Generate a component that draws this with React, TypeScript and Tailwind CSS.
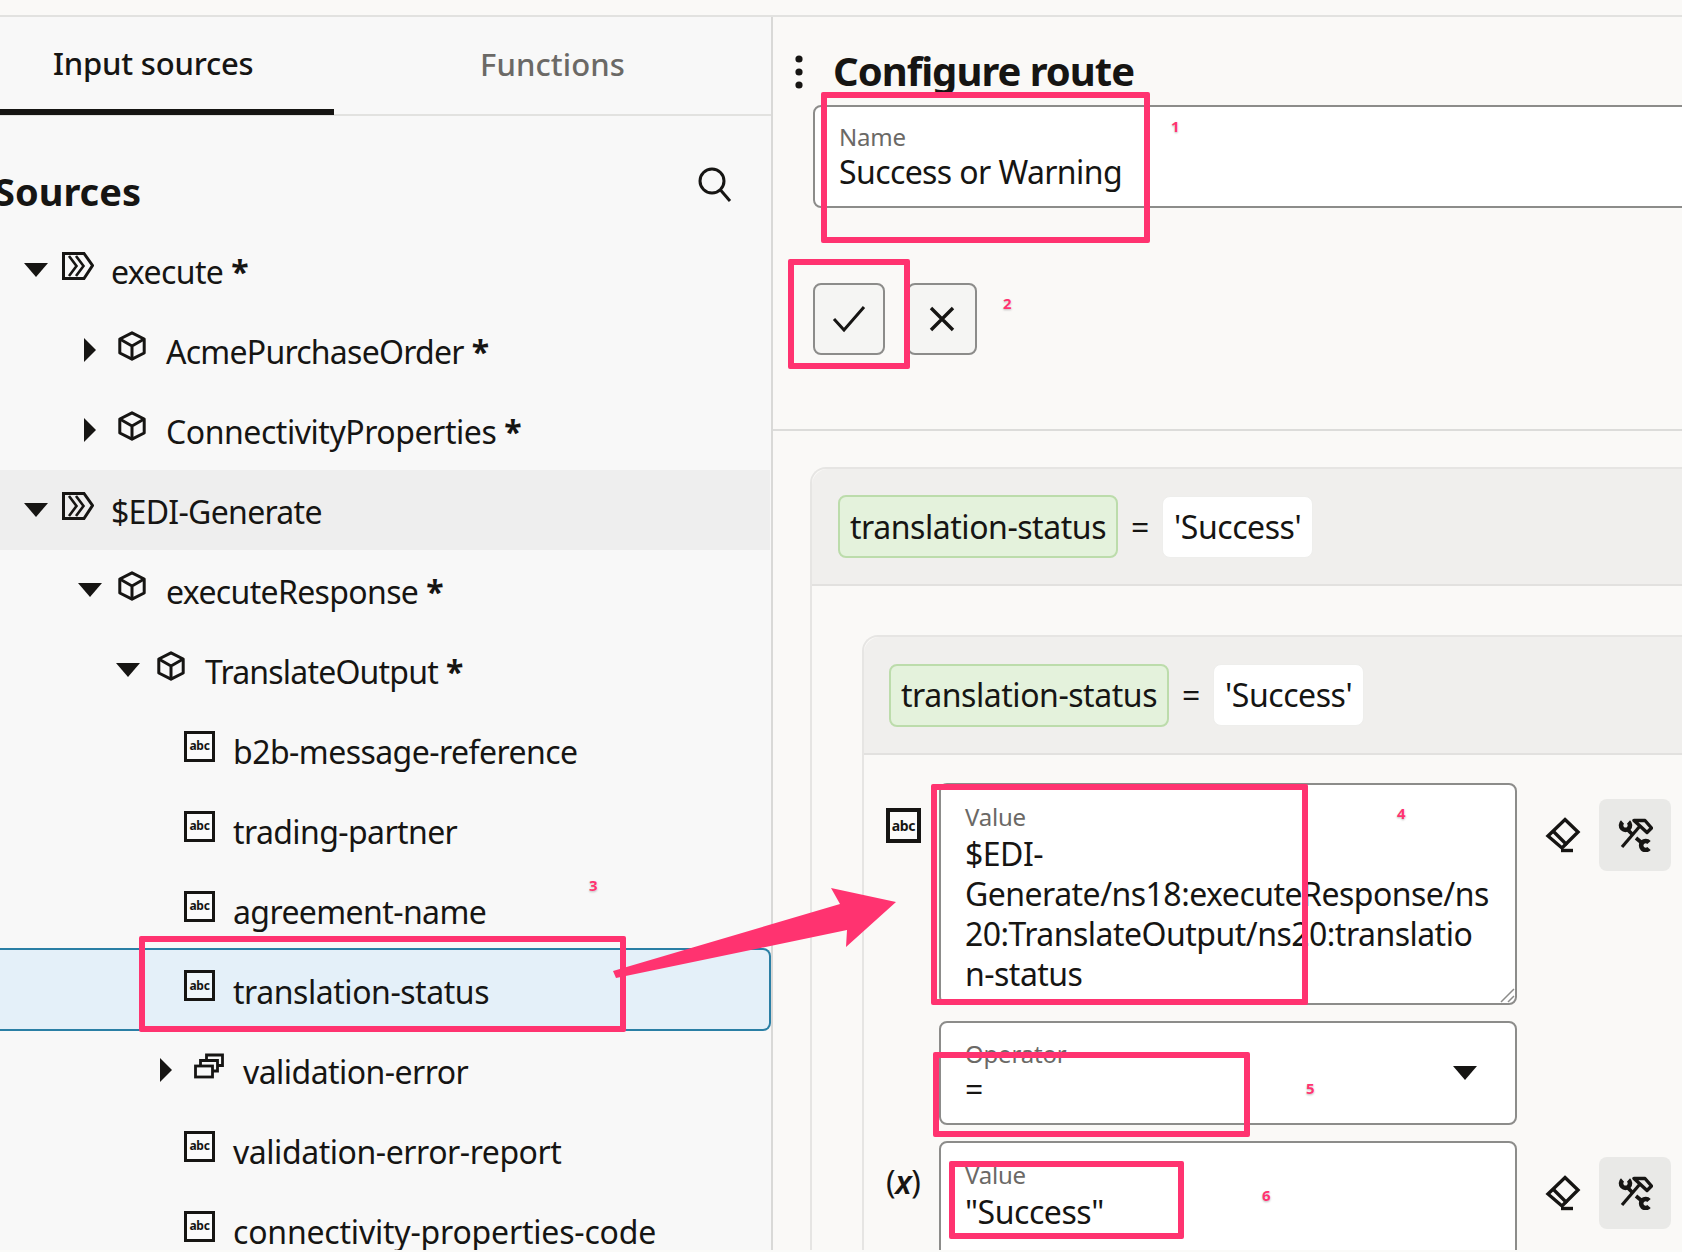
const FONT = "font-['Noto_Sans',sans-serif]";

function Caret({ dir, className = '' }: { dir: 'down' | 'right'; className?: string }) {
  return dir === 'down' ? (
    <svg viewBox="0 0 24 14" className={`w-[24px] h-[14px] shrink-0 ${className}`}>
      <path d="M0 0H24L12 14Z" fill="#161513" />
    </svg>
  ) : (
    <svg viewBox="0 0 12 24" className={`w-[12px] h-[24px] shrink-0 ${className}`}>
      <path d="M0 0V24L12 12Z" fill="#161513" />
    </svg>
  );
}

function FlowIcon({ className }: { className: string }) {
  return (
    <svg viewBox="0 0 32 28" className={`w-[32px] h-[28px] shrink-0 ${className}`} fill="none" stroke="#161513" strokeWidth="3">
      <path d="M1.5 1.5H22L30.5 13.5L22 26.5H1.5Z" />
      <path d="M7 4L14.5 14L7 24M14 4L21.5 14L14 24" strokeWidth="2.6" />
    </svg>
  );
}

function CubeIcon({ className }: { className: string }) {
  return (
    <svg viewBox="0 0 28 30" className={`w-[28px] h-[30px] shrink-0 ${className}`} fill="none" stroke="#161513" strokeWidth="3" strokeLinejoin="round">
      <path d="M14 1.8L26.2 8V22L14 28.2L1.8 22V8Z" />
      <path d="M1.8 8L14 15L26.2 8M14 15V28.2" />
    </svg>
  );
}

function AbcIcon({ className }: { className: string }) {
  return (
    <span className={`flex items-center justify-center w-[31px] h-[31px] shrink-0 border-[3px] border-[#161513] bg-white/40 text-[12px] leading-none font-bold tracking-[-0.3px] text-[#161513] ${className}`}>
      abc
    </span>
  );
}

function ArrayIcon({ className }: { className: string }) {
  return (
    <svg viewBox="0 0 30 26" className={`w-[30px] h-[26px] shrink-0 ${className}`} fill="none" stroke="#161513" strokeWidth="2.8">
      <rect x="1.5" y="13" width="17" height="11" />
      <path d="M6.5 13V7.5H23.5V18H18.5" />
      <path d="M12.5 7.5V2H28.5V12.5H23.5" />
    </svg>
  );
}

function Star() {
  return <span className="font-bold ml-[8px]">*</span>;
}

function Row({
  children,
  label,
  star,
  className = '',
  textClass,
}: {
  children: React.ReactNode;
  label: string;
  star?: boolean;
  className?: string;
  textClass: string;
}) {
  return (
    <div className={`flex items-center h-[80px] mr-[1px] shrink-0 ${className}`}>
      {children}
      <span className={`pt-[4px] text-[32px] leading-[40px] text-[#161513] whitespace-nowrap ${textClass}`}>
        {label}
        {star && <Star />}
      </span>
    </div>
  );
}

function Eraser() {
  return (
    <svg viewBox="0 0 36 36" className="w-[36px] h-[36px]" fill="none" stroke="#161513" strokeWidth="3.4">
      <path d="M20 2.5L33 15L17 31L3 19Z" />
      <path d="M8 14L22 28" />
      <path d="M16 33.5H28" />
    </svg>
  );
}

function Tools() {
  return (
    <svg viewBox="0 0 36 34" className="w-[36px] h-[34px]" fill="none" stroke="#161513">
      <path d="M5 29L23 8" strokeWidth="3.2" />
      <path d="M17 2.5H28L34.5 10L30 14.5L23 8Z" strokeWidth="3.4" strokeLinejoin="round" />
      <path d="M5.5 4A4.5 4.5 0 1 0 11.5 4" strokeWidth="4.6" />
      <path d="M10 11L16 17" strokeWidth="3.8" />
      <path d="M32 24.5A4.5 4.5 0 1 0 32 30.5" strokeWidth="4.6" />
      <path d="M19 20L25 25" strokeWidth="3.8" />
    </svg>
  );
}

function Chips() {
  return (
    <div className="flex items-center">
      <span className="flex items-center h-[63px] px-[10px] rounded-lg border-2 border-[#bcdcab] bg-[#e4f2dc] text-[32px] text-[#161513]">
        translation-status
      </span>
      <span className="w-[44px] text-center text-[32px] text-[#161513]">=</span>
      <span className="flex items-center h-[62px] px-[11px] rounded-lg border border-[#eeeeec] bg-white text-[32px] text-[#161513]">
        'Success'
      </span>
    </div>
  );
}

function Label({ children, className = 'leading-[32px]' }: { children: React.ReactNode; className?: string }) {
  return <div className={`text-[24px] tracking-[-0.2px] text-[#6b6966] ${className}`}>{children}</div>;
}

function Pink({ className }: { className: string }) {
  return <div className={`absolute border-[6px] border-[#ff3370] rounded-[2px] ${className}`} />;
}

function Num({ n, className }: { n: number; className: string }) {
  return (
    <span className={`absolute text-[15px] leading-[15px] font-bold tracking-normal text-[#ff3370] [text-shadow:0_0_2px_white,0_1px_2px_#aaa] ${className}`}>
      {n}
    </span>
  );
}

function Actions() {
  return (
    <div className="flex items-center ml-[28px] mt-[16px] h-[72px]">
      <Eraser />
      <div className="flex items-center justify-center w-[72px] h-[72px] ml-[18px] rounded-lg bg-[#e9e9e7]">
        <Tools />
      </div>
    </div>
  );
}

export default function App() {
  return (
    <div className={`relative w-[1682px] h-[1252px] overflow-hidden bg-[#fafaf8] tracking-[-0.45px] ${FONT}`}>
      <div className="flex flex-col h-[1250px] overflow-hidden">
        <div className="h-[17px] shrink-0 bg-[#faf9f7] border-b-2 border-[#e2e2e0]" />
        <div className="flex flex-1 min-h-0">
          {/* Left panel */}
          <div className="flex flex-col w-[773px] shrink-0 overflow-hidden bg-[#f8f8f8] border-r-2 border-[#d9d9d7]">
            <div className="flex h-[99px] shrink-0 border-b-2 border-[#e2e2e0]">
              <div className="flex items-center w-[334px] h-[98px] pl-[53px] border-b-[6px] border-[#161513] text-[31px] font-medium tracking-[-0.2px] text-[#161513]">
                Input sources
              </div>
              <div className="flex items-center justify-center flex-1 pb-[2px] text-[31px] font-medium tracking-[0.1px] text-[#6b6966]">
                Functions
              </div>
            </div>
            <div className="flex items-start justify-between h-[114px] shrink-0 pr-[38px]">
              <div className="-ml-[6px] mt-[50px] text-[38px] leading-[50px] font-bold tracking-normal text-[#161513]">Sources</div>
              <svg viewBox="0 0 36 36" className="w-[36px] h-[36px] mt-[50px]" fill="none" stroke="#161513" strokeWidth="3">
                <circle cx="15" cy="15" r="12" />
                <path d="M23.5 24L33 35" />
              </svg>
            </div>
            <Row label="execute" star className="pl-[24px]" textClass="ml-[17px] tracking-[-0.6px]">
              <Caret dir="down" />
              <FlowIcon className="ml-[14px] mb-[8px]" />
            </Row>
            <Row label="AcmePurchaseOrder" star className="pl-[84px]" textClass="ml-[20px] tracking-[-0.75px]">
              <Caret dir="right" />
              <CubeIcon className="ml-[22px] mb-[8px]" />
            </Row>
            <Row label="ConnectivityProperties" star className="pl-[84px]" textClass="ml-[20px]">
              <Caret dir="right" />
              <CubeIcon className="ml-[22px] mb-[8px]" />
            </Row>
            <Row label="$EDI-Generate" className="pl-[24px] bg-[#eeeeee]" textClass="ml-[17px] tracking-[-0.7px]">
              <Caret dir="down" />
              <FlowIcon className="ml-[14px] mb-[8px]" />
            </Row>
            <Row label="executeResponse" star className="pl-[78px]" textClass="ml-[20px] tracking-[-0.65px]">
              <Caret dir="down" />
              <CubeIcon className="ml-[16px] mb-[8px]" />
            </Row>
            <Row label="TranslateOutput" star className="pl-[116px]" textClass="ml-[20px] tracking-[-0.8px]">
              <Caret dir="down" />
              <CubeIcon className="ml-[17px] mb-[8px]" />
            </Row>
            <Row label="b2b-message-reference" className="pl-[184px]" textClass="ml-[18px] tracking-[-0.55px]">
              <AbcIcon className="mb-[8px]" />
            </Row>
            <Row label="trading-partner" className="pl-[184px]" textClass="ml-[18px] tracking-[-0.6px]">
              <AbcIcon className="mb-[8px]" />
            </Row>
            <Row label="agreement-name" className="pl-[184px]" textClass="ml-[18px] tracking-[-0.6px]">
              <AbcIcon className="mb-[8px]" />
            </Row>
            <Row
              label="translation-status"
              className="pl-[184px] !h-[83px] -mt-[2px] -mb-[1px] !mr-0 bg-[#e4f0f9] border-y-2 border-r-2 border-[#2a7fa5] rounded-r-lg"
              textClass="ml-[18px]"
            >
              <AbcIcon className="mb-[8px]" />
            </Row>
            <Row label="validation-error" className="pl-[160px]" textClass="ml-[19px] tracking-[-0.55px]">
              <Caret dir="right" />
              <ArrayIcon className="ml-[22px] mb-[8px]" />
            </Row>
            <Row label="validation-error-report" className="pl-[184px]" textClass="ml-[18px]">
              <AbcIcon className="mb-[8px]" />
            </Row>
            <Row label="connectivity-properties-code" className="pl-[184px]" textClass="ml-[18px] tracking-[-0.2px]">
              <AbcIcon className="mb-[8px]" />
            </Row>
          </div>

          {/* Right panel */}
          <div className="flex flex-col flex-1 min-w-0 overflow-hidden bg-[#faf9f7]">
            <div className="h-[414px] shrink-0 border-b-2 border-[#dcdcda]">
              <div className="flex items-center h-[88px] pt-[22px] pl-[21px]">
                <svg viewBox="0 0 10 36" className="w-[10px] h-[36px]" fill="#161513">
                  <circle cx="5" cy="5" r="3.6" />
                  <circle cx="5" cy="18" r="3.6" />
                  <circle cx="5" cy="31" r="3.6" />
                </svg>
                <div className="ml-[29px] pb-[2px] text-[40px] leading-[50px] font-bold tracking-[-1px] text-[#161513]">Configure route</div>
              </div>
              <div className="ml-[40px] h-[103px] w-[900px] pt-[15px] pl-[24px] rounded-l-lg border-2 border-[#8c8c8a] bg-white">
                <Label className="leading-[30px]">Name</Label>
                <div className="text-[32px] leading-[40px] tracking-[-0.6px] text-[#161513]">Success or Warning</div>
              </div>
              <div className="flex gap-[22px] ml-[40px] mt-[75px]">
                <div className="flex items-center justify-center w-[72px] h-[72px] rounded-lg border-2 border-[#8c8c8a] bg-[#f5f5f3]">
                  <svg viewBox="0 0 34 28" className="w-[34px] h-[28px]" fill="none" stroke="#161513" strokeWidth="3">
                    <path d="M2 14L12 25L32 2" />
                  </svg>
                </div>
                <div className="flex items-center justify-center w-[70px] h-[72px] rounded-lg border-2 border-[#8c8c8a] bg-[#f5f5f3]">
                  <svg viewBox="0 0 26 26" className="w-[26px] h-[26px]" fill="none" stroke="#161513" strokeWidth="3.4">
                    <path d="M2 2L24 24M24 2L2 24" />
                  </svg>
                </div>
              </div>
            </div>
            {/* Outer card */}
            <div className="ml-[37px] mt-[36px] w-[900px] flex-1 rounded-tl-2xl border-l-2 border-t-2 border-[#e6e5e3]">
              <div className="flex items-center h-[117px] pl-[26px] bg-[#f0efed] border-b-2 border-[#e2e1df] rounded-tl-2xl">
                <Chips />
              </div>
              {/* Inner card */}
              <div className="ml-[50px] mt-[49px] rounded-tl-2xl border-l-2 border-t-2 border-[#e6e5e3]">
                <div className="flex items-center h-[118px] pl-[25px] bg-[#f0efed] border-b-2 border-[#e2e1df] rounded-tl-2xl">
                  <Chips />
                </div>
                <div className="flex flex-col gap-[16px] pt-[28px]">
                  <div className="flex items-start">
                    <div className="w-[75px] pl-[22px] pt-[25px] shrink-0">
                      <AbcIcon className="!w-[35px] !h-[35px] !border-[4px] !text-[14px]" />
                    </div>
                    <div className="relative w-[578px] h-[222px] shrink-0 pt-[16px] pl-[24px] rounded-lg border-2 border-[#8c8c8a] bg-white text-[32px] leading-[40px] tracking-[-0.52px] text-[#161513]">
                      <div className="mb-[1px]">
                        <Label>Value</Label>
                      </div>
                      <div>$EDI-</div>
                      <div>Generate/ns18:executeResponse/ns</div>
                      <div>20:TranslateOutput/ns20:translatio</div>
                      <div>n-status</div>
                      <svg viewBox="0 0 16 16" className="absolute right-0 bottom-0 w-[16px] h-[16px]" stroke="#8c8c8a" strokeWidth="1.5">
                        <path d="M2 15L15 2M9 15L15 9" />
                      </svg>
                    </div>
                    <Actions />
                  </div>
                  <div className="flex items-start">
                    <div className="w-[75px] shrink-0" />
                    <div className="flex items-start justify-between w-[578px] h-[104px] shrink-0 pt-[15px] pl-[24px] pr-[38px] rounded-lg border-2 border-[#8c8c8a] bg-white">
                      <div>
                        <Label className="leading-[31px]">Operator</Label>
                        <div className="text-[32px] leading-[40px] text-[#161513]">=</div>
                      </div>
                      <svg viewBox="0 0 24 14" className="w-[24px] h-[14px] mt-[28px]">
                        <path d="M0 0H24L12 14Z" fill="#161513" />
                      </svg>
                    </div>
                  </div>
                  <div className="flex items-start">
                    <div className="w-[75px] pl-[22px] pt-[21px] shrink-0 text-[32px] leading-[40px] text-[#161513]">
                      (<span className="italic font-semibold">x</span>)
                    </div>
                    <div className="w-[578px] h-[150px] shrink-0 pt-[16px] pl-[24px] rounded-lg border-2 border-[#8c8c8a] bg-white">
                      <div className="mb-[1px]">
                        <Label>Value</Label>
                      </div>
                      <div className="text-[32px] leading-[40px] text-[#161513]">"Success"</div>
                    </div>
                    <Actions />
                  </div>
                </div>
              </div>
            </div>
          </div>
        </div>
      </div>

      {/* Annotations */}
      <Pink className="left-[821px] top-[92px] w-[329px] h-[151px]" />
      <Pink className="left-[788px] top-[259px] w-[122px] h-[110px]" />
      <Pink className="left-[139px] top-[936px] w-[487px] h-[96px]" />
      <Pink className="left-[931px] top-[784px] w-[377px] h-[221px]" />
      <Pink className="left-[933px] top-[1052px] w-[317px] h-[85px]" />
      <Pink className="left-[949px] top-[1161px] w-[235px] h-[78px]" />
      <svg className="absolute left-0 top-0 w-[1682px] h-[1252px] pointer-events-none" viewBox="0 0 1682 1252">
        <path d="M613 971L616 978L847 930L846 947L896 902L831 888L840 904Z" fill="#ff3370" />
      </svg>
      <Num n={1} className="left-[1171px] top-[119px]" />
      <Num n={2} className="left-[1003px] top-[296px]" />
      <Num n={3} className="left-[589px] top-[878px]" />
      <Num n={4} className="left-[1397px] top-[806px]" />
      <Num n={5} className="left-[1306px] top-[1081px]" />
      <Num n={6} className="left-[1262px] top-[1188px]" />
    </div>
  );
}
